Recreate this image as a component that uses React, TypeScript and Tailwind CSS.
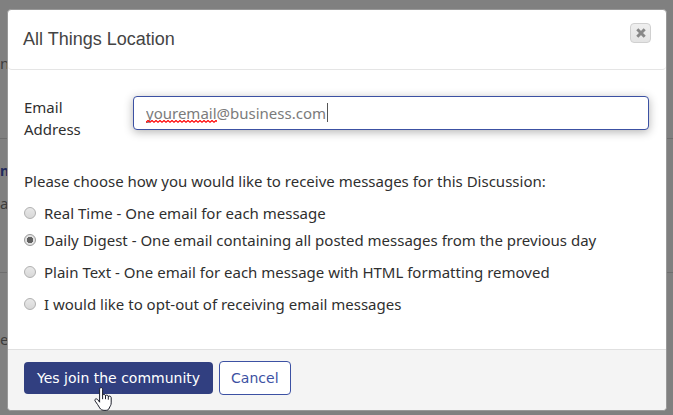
import { useState } from 'react';
import clsx from 'clsx';

const OPTIONS = [
  { id: 'real-time', label: 'Real Time - One email for each message' },
  { id: 'daily-digest', label: 'Daily Digest - One email containing all posted messages from the previous day' },
  { id: 'plain-text', label: 'Plain Text - One email for each message with HTML formatting removed' },
  { id: 'opt-out', label: 'I would like to opt-out of receiving email messages' },
];

export default function App() {
  return (
    <div className="relative min-h-screen overflow-hidden bg-[#808080] font-['Noto_Sans',sans-serif] text-[15px]">
      <PageBehind />
      <div className="relative pt-[9px] pr-[6px] pb-1 pl-[7px]">
        <JoinDialog />
      </div>
    </div>
  );
}

function PageBehind() {
  return (
    <div className="absolute inset-0 text-[#3c3c3c]" aria-hidden="true">
      <div className="flex h-[139px] items-start border-b border-[#6e6e6e] pt-[51px] leading-6">n</div>
      <div className="h-[134px] border-b border-[#6e6e6e] pt-5">
        <div className="text-sm leading-6 font-bold text-[#1f2a5c]">n</div>
        <div className="pt-2 leading-6">a</div>
      </div>
      <div className="pt-[54px] leading-6">e</div>
    </div>
  );
}

function JoinDialog() {
  const [email, setEmail] = useState('youremail@business.com');
  const [choice, setChoice] = useState('daily-digest');

  return (
    <form
      role="dialog"
      aria-labelledby="dialog-title"
      onSubmit={(e) => e.preventDefault()}
      className="rounded border border-[#999999] bg-white text-[#2f2f2f]"
    >
      <header className="flex h-[60px] items-center justify-between rounded-b border-b border-[#e5e5e5] px-[15px] pb-px">
        <h1 id="dialog-title" className="font-['Liberation_Sans',sans-serif] text-lg text-[#444444]">
          All Things Location
        </h1>
        <button
          type="button"
          aria-label="Close"
          className="mb-3 flex h-5 w-[21px] items-center justify-center rounded border border-[#d0d0d0] bg-linear-to-b from-[#efefef] to-[#e4e4e4]"
        >
          <CloseIcon />
        </button>
      </header>

      <div className="pt-[26px] pr-[17px] pb-[34px] pl-4">
        <div className="flex items-start">
          <label htmlFor="email" className="w-[109px] shrink-0 pr-8 leading-[22px]">
            Email Address
          </label>
          <div className="relative flex-1">
            <input
              id="email"
              type="text"
              spellCheck={false}
              value={email}
              onChange={(e) => setEmail(e.target.value)}
              className="block h-[34px] w-full rounded border border-[#3c51a3] bg-white px-3 pb-px text-[#7b7b7b] shadow-[0_2px_10px_rgba(0,0,0,0.3)] outline-none"
            />
            <Squiggle />
            <span className="absolute top-[7px] left-[194px] h-[19px] w-px bg-[#555555]" />
          </div>
        </div>

        <fieldset className="pt-[30px]">
          <legend className="float-left w-full leading-[22px]">
            Please choose how you would like to receive messages for this Discussion:
          </legend>
          <div className="clear-both flex flex-col gap-[10px] pt-[10px]">
            {OPTIONS.map((option) => (
              <label
                key={option.id}
                className={clsx('flex items-center gap-2 leading-[22px]', option.id === 'daily-digest' && '-mt-[5px]')}
              >
                <input
                  type="radio"
                  name="delivery"
                  checked={choice === option.id}
                  onChange={() => setChoice(option.id)}
                  className="h-3 w-3 shrink-0 appearance-none rounded-full border border-[#b0b0b0] bg-linear-to-b from-[#e8e8e8] to-[#d8d8d8] checked:border-[#999999] checked:bg-[radial-gradient(circle,#606060_0_3px,#e2e2e2_3px)]"
                />
                {option.label}
              </label>
            ))}
          </div>
        </fieldset>
      </div>

      <footer className="flex items-center gap-[6px] rounded-b border-t border-[#e0e0e0] bg-[#f4f4f4] px-4 pt-[11px] pb-[15px] font-['DejaVu_Sans',sans-serif] text-sm">
        <div className="relative">
          <button type="submit" className="block h-8 rounded bg-[#313f80] px-[13px] pb-px text-white">
            Yes join the community
          </button>
          <HandPointer />
        </div>
        <button type="button" className="h-[34px] rounded border border-[#3c51a3] bg-white px-[11px] pb-px text-[#3c51a3]">
          Cancel
        </button>
      </footer>
    </form>
  );
}

function CloseIcon() {
  return (
    <svg width="10" height="10" viewBox="0 0 10 10" fill="none" stroke="#888888" strokeWidth="3" aria-hidden="true">
      <path d="M1.3 1.3l7.4 7.4M8.7 1.3L1.3 8.7" />
    </svg>
  );
}

function Squiggle() {
  return (
    <svg className="absolute top-6 left-[13px]" width="71" height="3" aria-hidden="true">
      <defs>
        <pattern id="wave" width="4" height="3" patternUnits="userSpaceOnUse">
          <path d="M-1 3L2 .5L5 3" fill="none" stroke="#ff0000" strokeWidth="1.2" />
        </pattern>
      </defs>
      <rect width="71" height="3" fill="url(#wave)" />
    </svg>
  );
}

function HandPointer() {
  return (
    <svg
      className="pointer-events-none absolute top-[25px] left-[70px] z-10"
      width="18"
      height="24"
      viewBox="0 0 18 24"
      fill="#ffffff"
      stroke="#1b1d29"
      strokeLinecap="round"
      strokeLinejoin="round"
      aria-hidden="true"
    >
      <path d="M5.6 14.8V2.2c0-2.1 3-2.1 3 0v6c.5-1.2 2.7-1 2.9.5c.7-1 2.5-.7 2.8.7c1-.8 2.9-.2 2.9 1.3v5.2c0 2.4-1.3 3.5-1.9 5.1c-.6 1.7-1.6 2.4-4.3 2.4c-3 0-4.2-.7-5.3-2.5c-1.2-2-2.7-4.4-4.5-6.8c-1.2-1.7.8-3 2.1-1.9z" />
      <path d="M8.6 8.2v3.6M11.5 8.7v3.1M14.3 9.5v2.8" fill="none" />
    </svg>
  );
}
